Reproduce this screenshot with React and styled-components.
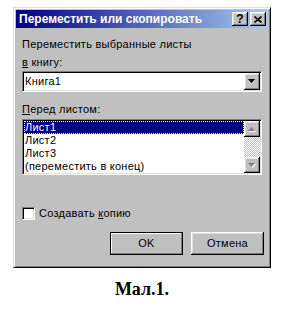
import React from "react";
import styled, { createGlobalStyle } from "styled-components";

const GlobalStyle = createGlobalStyle`
	html, body {
		margin: 0;
		background: #fff;
	}
	body {
		font-family: "Liberation Sans", Arial, sans-serif;
	}
`;

const raised = `
	box-shadow: inset -1px -1px #000, inset 1px 1px #fff, inset -2px -2px #808080, inset 2px 2px #dfdfdf;
`;

const sunken = `
	border: 1px solid;
	border-color: #808080 #fff #fff #808080;
	box-shadow: inset 1px 1px #000, inset -1px -1px #dfdfdf;
	padding: 1px;
`;

const Page = styled.div`
	width: 283px;
	height: 310px;
	box-sizing: border-box;
	padding: 7px 0 0 13px;
`;

const Figure = styled.div`
	width: 258px;
	display: flex;
	flex-direction: column;
	align-items: center;
`;

const Window = styled.div`
	width: 258px;
	box-sizing: border-box;
	background: #c0c0c0;
	border: 1px solid;
	border-color: #dfdfdf #000 #000 #dfdfdf;
	box-shadow: inset 1px 1px #fff, inset -1px -1px #808080;
	padding: 2px;
`;

const TitleBar = styled.div`
	height: 18px;
	display: flex;
	align-items: center;
	padding: 0 2px 0 3px;
	background: linear-gradient(to right, #000080, #a6caf0);
	color: #fff;
	font-weight: bold;
	font-size: 12px;
`;

const TitleText = styled.span`
	flex: 1;
	white-space: nowrap;
`;

const TitleButton = styled.div`
	width: 16px;
	height: 14px;
	box-sizing: border-box;
	background: #c0c0c0;
	${raised}
	display: flex;
	align-items: center;
	justify-content: center;
	color: #000;
	font-size: 12px;
	font-weight: bold;
	line-height: 12px;
	margin-left: ${(p) => p.$gap || 0}px;
`;

const Body = styled.div`
	display: flex;
	flex-direction: column;
	padding: 0 6px 10px 6px;
	font-size: 11px;
	line-height: 13px;
	letter-spacing: 0.25px;
	color: #000;
`;

const Label = styled.div`
	margin-top: ${(p) => p.$mt}px;
	white-space: nowrap;
`;

const Key = styled.span`
	text-decoration: underline;
`;

const Combo = styled.div`
	margin-top: 2px;
	width: 240px;
	height: 21px;
	box-sizing: border-box;
	background: #fff;
	display: flex;
	${sunken}
`;

const ComboText = styled.div`
	flex: 1;
	display: flex;
	align-items: center;
	padding-left: 1px;
`;

const ArrowButton = styled.div`
	width: 16px;
	flex: none;
	height: ${(p) => p.$h}px;
	box-sizing: border-box;
	background: #c0c0c0;
	${raised}
	display: flex;
	align-items: center;
	justify-content: center;
`;

const List = styled.div`
	margin-top: 3px;
	width: 240px;
	height: 56px;
	box-sizing: border-box;
	background: #fff;
	display: flex;
	${sunken}
`;

const Rows = styled.div`
	flex: 1;
	display: flex;
	flex-direction: column;
`;

const Row = styled.div`
	height: 13px;
	line-height: 13px;
	padding-left: 1px;
	white-space: nowrap;
	background: ${(p) => (p.$selected ? "#000080" : "transparent")};
	color: ${(p) => (p.$selected ? "#fff" : "#000")};
	outline: ${(p) => (p.$selected ? "1px dotted #ffffa0" : "none")};
	outline-offset: -1px;
`;

const ScrollBar = styled.div`
	width: 16px;
	display: flex;
	flex-direction: column;
`;

const Track = styled.div`
	flex: 1;
	background: conic-gradient(#fff 25%, #c0c0c0 0 50%, #fff 0 75%, #c0c0c0 0) 0 0 / 2px 2px;
`;

const CheckRow = styled.label`
	margin-top: 32px;
	display: flex;
	align-items: center;
	gap: 4px;
`;

const CheckBox = styled.span`
	width: 13px;
	height: 13px;
	box-sizing: border-box;
	background: #fff;
	${sunken}
`;

const Buttons = styled.div`
	margin-top: 12px;
	margin-right: -2px;
	display: flex;
	justify-content: flex-end;
	gap: 8px;
`;

const Button = styled.div`
	width: 73px;
	height: 23px;
	box-sizing: border-box;
	background: #c0c0c0;
	display: flex;
	align-items: center;
	justify-content: center;
	${(p) =>
		p.$default
			? `border: 1px solid #000;
	box-shadow: inset -1px -1px #808080, inset 1px 1px #fff;`
			: raised}
`;

const Caption = styled.div`
	margin-top: 11px;
	font-family: "Liberation Serif", "Times New Roman", serif;
	font-weight: bold;
	font-size: 18px;
	line-height: 20px;
	color: #000;
`;

function Triangle({ down, disabled }) {
	const pts = down ? "0,0 7,0 3.5,4" : "3.5,0 7,4 0,4";
	return (
		<svg width="8" height="5" viewBox="0 0 8 5">
			{disabled && <polygon points={pts} fill="#fff" transform="translate(1,1)" />}
			<polygon points={pts} fill={disabled ? "#808080" : "#000"} />
		</svg>
	);
}

function CloseGlyph() {
	return (
		<svg width="8" height="7" viewBox="0 0 8 7">
			<path d="M0.5 0.5 L7.5 6.5 M7.5 0.5 L0.5 6.5" stroke="#000" strokeWidth="1.6" />
		</svg>
	);
}

function App() {
	const sheets = ["Лист1", "Лист2", "Лист3", "(переместить в конец)"];

	return (
		<Page>
			<GlobalStyle />
			<Figure>
				<Window>
					<TitleBar>
						<TitleText>Переместить или скопировать</TitleText>
						<TitleButton>?</TitleButton>
						<TitleButton $gap={2}>
							<CloseGlyph />
						</TitleButton>
					</TitleBar>
					<Body>
						<Label $mt={10}>Переместить выбранные листы</Label>
						<Label $mt={5}>
							<Key>в</Key> книгу:
						</Label>
						<Combo>
							<ComboText>Книга1</ComboText>
							<ArrowButton $h={17}>
								<Triangle down />
							</ArrowButton>
						</Combo>
						<Label $mt={11}>
							<Key>П</Key>еред листом:
						</Label>
						<List>
							<Rows>
								{sheets.map((name, i) => (
									<Row key={name} $selected={i === 0}>
										{name}
									</Row>
								))}
							</Rows>
							<ScrollBar>
								<ArrowButton $h={16}>
									<Triangle disabled />
								</ArrowButton>
								<Track />
								<ArrowButton $h={16}>
									<Triangle down disabled />
								</ArrowButton>
							</ScrollBar>
						</List>
						<CheckRow>
							<CheckBox />
							<span>
								Создавать <Key>к</Key>опию
							</span>
						</CheckRow>
						<Buttons>
							<Button $default>OK</Button>
							<Button>Отмена</Button>
						</Buttons>
					</Body>
				</Window>
				<Caption>Мал.1.</Caption>
			</Figure>
		</Page>
	);
}

export default App;
